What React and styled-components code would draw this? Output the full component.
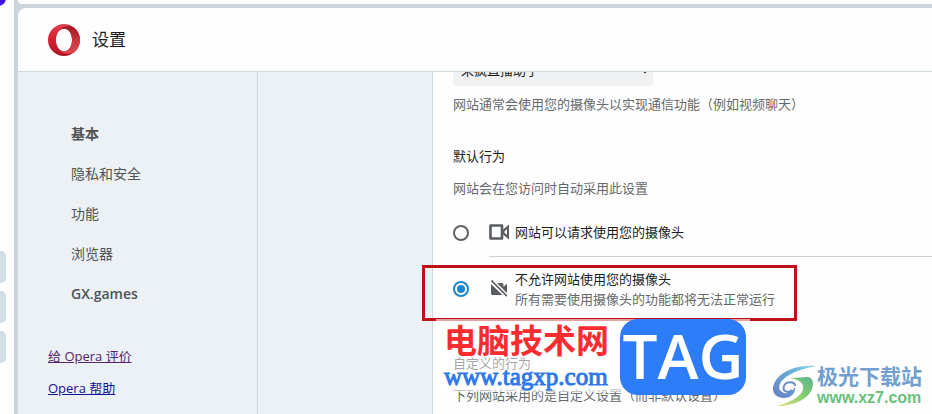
import React from "react";
import styled, { createGlobalStyle } from "styled-components";

const App = () => {
  return (
    <Page>
      <GlobalStyle />
      <Rail>
        <RailBadge />
        <RailTab aria-label="1" />
        <RailTab aria-label="2" />
        <RailTab aria-label="3" />
      </Rail>
      <Column>
        <TopStrip />
        <Panel>
          <Header>
            <OperaLogo />
            <h1>设置</h1>
          </Header>
          <Body>
            <Sidebar>
              <Nav>
                {sections.map((section) => (
                  <NavItem key={section.name} $bold={section.bold}>
                    {section.name}
                  </NavItem>
                ))}
              </Nav>
              <SideLink href="#rate" $visited>
                给 Opera 评价
              </SideLink>
              <SideLink href="#help">Opera 帮助</SideLink>
            </Sidebar>
            <Spacer />
            <Main>
              <CameraSelect aria-label="摄像头" defaultValue="来疯直播助手">
                <option>来疯直播助手</option>
              </CameraSelect>
              <Hint>网站通常会使用您的摄像头以实现通信功能（例如视频聊天）</Hint>
              <Title>默认行为</Title>
              <Hint $spaced>网站会在您访问时自动采用此设置</Hint>
              <Options>
                <Option>
                  <Radio type="radio" name="camera" />
                  <OptionBody $divider>
                    <CameraIcon />
                    <span>网站可以请求使用您的摄像头</span>
                  </OptionBody>
                </Option>
                <Option $tall>
                  <Radio type="radio" name="camera" defaultChecked />
                  <OptionBody>
                    <CameraOffIcon />
                    <span>
                      不允许网站使用您的摄像头
                      <Note>所有需要使用摄像头的功能都将无法正常运行</Note>
                    </span>
                  </OptionBody>
                  <Highlight />
                </Option>
              </Options>
              <Title>自定义的行为</Title>
              <Hint $spaced>下列网站采用的是自定义设置（而非默认设置）</Hint>
              <TagMark>
                <TagText>
                  <strong>电脑技术网</strong>
                  <span>www.tagxp.com</span>
                </TagText>
                <TagBox>TAG</TagBox>
              </TagMark>
            </Main>
          </Body>
        </Panel>
      </Column>
      <SiteMark>
        <SwirlLogo />
        <SiteText>
          <strong>极光下载站</strong>
          <span>www.xz7.com</span>
        </SiteText>
      </SiteMark>
    </Page>
  );
};

const sections = [
  { name: "基本", bold: true },
  { name: "隐私和安全" },
  { name: "功能" },
  { name: "浏览器" },
  { name: "GX.games", bold: true },
];

// Icons:
const OperaLogo = () => (
  <svg width="32" height="32" viewBox="0 0 32 32" aria-hidden="true">
    <defs>
      <linearGradient id="ring" x1="0" y1="0" x2="0" y2="1">
        <stop offset="0" stopColor="#e04450" />
        <stop offset="0.4" stopColor="#dc2034" />
        <stop offset="1" stopColor="#b01424" />
      </linearGradient>
      <linearGradient id="side" x1="0" y1="0" x2="0" y2="1">
        <stop offset="0" stopColor="#a01820" />
        <stop offset="0.6" stopColor="#d03a42" />
        <stop offset="1" stopColor="#dc4a50" />
      </linearGradient>
    </defs>
    <path
      fill="url(#ring)"
      fillRule="evenodd"
      d="M16 0a16 16 0 1 0 0 32a16 16 0 1 0 0-32zM16 4.600c4.400 0 8 5 8 11.400s-3.600 11.400-8 11.400s-8-5-8-11.400s3.600-11.400 8-11.400z"
    />
    <path
      fill="url(#side)"
      d="M11 6.800C14 2.500 20 .8 26.200 3.700C34 10 34 22 26.200 28.300C20 31.200 14 29.500 11 25.200C16 29.500 24 27 24 16S16 2.500 11 6.800z"
    />
  </svg>
);

const CameraIcon = () => (
  <svg width="22" height="20" viewBox="0 0 22 20" aria-hidden="true">
    <path
      d="M1.500 3.500h11.500v13h-11.500z"
      fill="none"
      stroke="#5a5d60"
      strokeWidth="2.600"
      strokeLinejoin="round"
    />
    <path
      d="M13.500 8L20 2.500v15L13.500 12zM15 10l3 3v-6z"
      fill="#5a5d60"
      fillRule="evenodd"
    />
  </svg>
);

const CameraOffIcon = () => (
  <svg width="22" height="20" viewBox="0 0 22 20" aria-hidden="true">
    <path
      d="M2 5L13.500 16H3.500a1.500 1.500 0 0 1-1.500-1.500zM7 4h6a1.500 1.500 0 0 1 1.500 1.500V8L18 4.500v11z"
      fill="#5a5d60"
    />
    <path d="M2.500 1.500l15.500 15.500" stroke="#5a5d60" strokeWidth="1.800" />
    <path d="M4.500 1.500l15 15" stroke="#fefefe" strokeWidth="1.200" />
  </svg>
);

const SwirlLogo = () => (
  <svg width="46" height="42" viewBox="0 0 46 42" aria-hidden="true">
    <defs>
      <linearGradient id="sky" x1="0" y1="1" x2="1" y2="0">
        <stop offset="0" stopColor="#6880c4" />
        <stop offset="0.6" stopColor="#68acd8" />
        <stop offset="1" stopColor="#90d4e0" />
      </linearGradient>
      <linearGradient id="leaf" x1="0" y1="1" x2="1" y2="0">
        <stop offset="0" stopColor="#e4e07c" />
        <stop offset="0.6" stopColor="#7cca74" />
        <stop offset="1" stopColor="#5cb48c" />
      </linearGradient>
    </defs>
    <path
      fill="url(#sky)"
      d="M45 1C30 0 13 4 5 15C-2 26 4 33 13 33C20 33 25 28 24 22C20 29 12 30 9 25C5 17 18 6 45 1z"
    />
    <path
      d="M24 21c0-5-9-5-11 0s4 8 8 4"
      fill="none"
      stroke="#6c8cca"
      strokeWidth="2"
    />
    <path
      fill="url(#leaf)"
      d="M19 13C30 14 41 8 42 18C42 33 24 41 5 41C19 38 34 30 32 21C31 16 25 14 19 13z"
    />
  </svg>
);

// Styles:
const GlobalStyle = createGlobalStyle`
  * {
    box-sizing: border-box;
  }
  body {
    margin: 0;
    font-family: "Open Sans", "Noto Sans CJK SC", sans-serif;
    font-size: 13px;
    line-height: 20px;
  }
`;

const Page = styled.div`
  position: relative;
  display: flex;
  gap: 4px;
  height: 100vh;
  overflow: hidden;
  background: #cbd5db;
`;

const Rail = styled.aside`
  position: relative;
  display: flex;
  flex-direction: column;
  gap: 8px;
  width: 14px;
  padding-top: 251px;
  background: #fefefe;
`;

const RailBadge = styled.div`
  position: absolute;
  top: -10px;
  left: -10px;
  width: 16px;
  height: 16px;
  border-radius: 50%;
  background: #3d12e6;
`;

const RailTab = styled.button`
  width: 6px;
  height: 32px;
  padding: 0;
  border: 0;
  border-radius: 0 5px 5px 0;
  background: #d3dfe6;
`;

const Column = styled.div`
  display: flex;
  flex: 1;
  flex-direction: column;
  gap: 4px;
  min-width: 0;
`;

const TopStrip = styled.div`
  height: 4px;
  border-radius: 0 0 0 8px;
  background: #fefefe;
`;

const Panel = styled.div`
  display: flex;
  flex: 1;
  flex-direction: column;
  min-height: 0;
  overflow: hidden;
  border-radius: 8px 0 0 0;
  background: #fefefe;
`;

const Header = styled.header`
  display: flex;
  align-items: center;
  gap: 12px;
  height: 64px;
  padding-left: 30px;
  border-bottom: 1px solid #ccd9df;
  h1 {
    margin: 0;
    color: #1c1c1c;
    font-size: 17px;
    font-weight: 400;
  }
`;

const Body = styled.div`
  display: flex;
  flex: 1;
  min-height: 0;
  overflow: hidden;
`;

const Sidebar = styled.div`
  display: flex;
  flex-direction: column;
  align-items: flex-start;
  gap: 12px;
  width: 240px;
  padding-left: 30px;
  border-right: 1px solid #ccd9e2;
  background: #ebf1f5;
`;

const Nav = styled.nav`
  padding: 42px 0 20px 23px;
`;

const NavItem = styled.div`
  color: #505356;
  font-size: 14px;
  font-weight: ${(props) => (props.$bold ? 600 : 400)};
  line-height: 40px;
`;

const SideLink = styled.a`
  color: ${(props) => (props.$visited ? "#55246f" : "#12128c")};
`;

const Spacer = styled.div`
  width: 175px;
  border-right: 1px solid #ccd9e2;
  background: #ebf1f5;
`;

const Main = styled.main`
  position: relative;
  flex: 1;
  min-width: 0;
  margin-top: -18px;
  padding-left: 20px;
`;

const CameraSelect = styled.select`
  display: block;
  width: 200px;
  height: 32px;
  padding: 0 4px;
  border: 0;
  border-radius: 4px;
  background: #eff1f3;
  color: #1c1c1c;
  font: inherit;
`;

const Hint = styled.p`
  margin: ${(props) => (props.$spaced ? "12px" : "8px")} 0 0;
  color: #66696c;
`;

const Title = styled.h2`
  margin: 32px 0 0;
  color: #1c1c1c;
  font-size: 13px;
  font-weight: 400;
`;

const Options = styled.div`
  margin-top: 10px;
`;

const Option = styled.label`
  position: relative;
  display: flex;
  align-items: center;
  gap: 20px;
  height: ${(props) => (props.$tall ? "64px" : "49px")};
  color: #1c1c1c;
`;

const Radio = styled.input`
  display: grid;
  place-items: center;
  width: 16px;
  height: 16px;
  margin: 0;
  border: 2px solid #5f6366;
  border-radius: 50%;
  appearance: none;
  &:checked {
    border-color: #1b87d2;
  }
  &:checked::before {
    content: "";
    width: 8px;
    height: 8px;
    border-radius: 50%;
    background: #1b87d2;
  }
`;

const OptionBody = styled.div`
  display: flex;
  flex: 1;
  align-items: center;
  gap: 4px;
  height: 100%;
  border-bottom: ${(props) => (props.$divider ? "1px solid #ccd2d7" : "0")};
`;

const Note = styled.small`
  display: block;
  color: #66696c;
  font-size: 13px;
`;

const Highlight = styled.div`
  position: absolute;
  top: 8px;
  left: -31px;
  width: 375px;
  height: 56px;
  border: 3px solid #bd1218;
`;

const TagMark = styled.div`
  position: absolute;
  top: 265px;
  left: 3px;
  display: flex;
  gap: 8px;
  width: 314px;
  height: 73px;
  padding-left: 8px;
  background: rgba(255, 255, 255, 0.6);
`;

const TagText = styled.div`
  display: flex;
  flex-direction: column;
  width: 168px;
  padding-top: 4px;
  strong {
    color: #fa2c30;
    font-size: 33px;
    font-weight: 700;
    line-height: 36px;
  }
  span {
    color: #2f78e8;
    font-family: "Liberation Serif", serif;
    font-size: 25px;
    -webkit-text-stroke: 1px #2f78e8;
    line-height: 36px;
  }
`;

const TagBox = styled.div`
  width: 126px;
  height: 76px;
  border-radius: 18px;
  background: #2d7cf8;
  color: #fff;
  font-size: 62px;
  font-weight: 600;
  line-height: 72px;
  text-align: center;
`;

const SiteMark = styled.div`
  position: absolute;
  right: 10px;
  bottom: 6px;
  display: flex;
  align-items: center;
`;

const SiteText = styled.div`
  display: flex;
  flex-direction: column;
  strong {
    color: #709fd0;
    font-size: 21px;
    line-height: 24px;
  }
  span {
    color: #68c17a;
    font-family: "Liberation Sans", sans-serif;
    font-size: 16px;
    font-weight: 700;
    line-height: 20px;
  }
`;

export default App;
